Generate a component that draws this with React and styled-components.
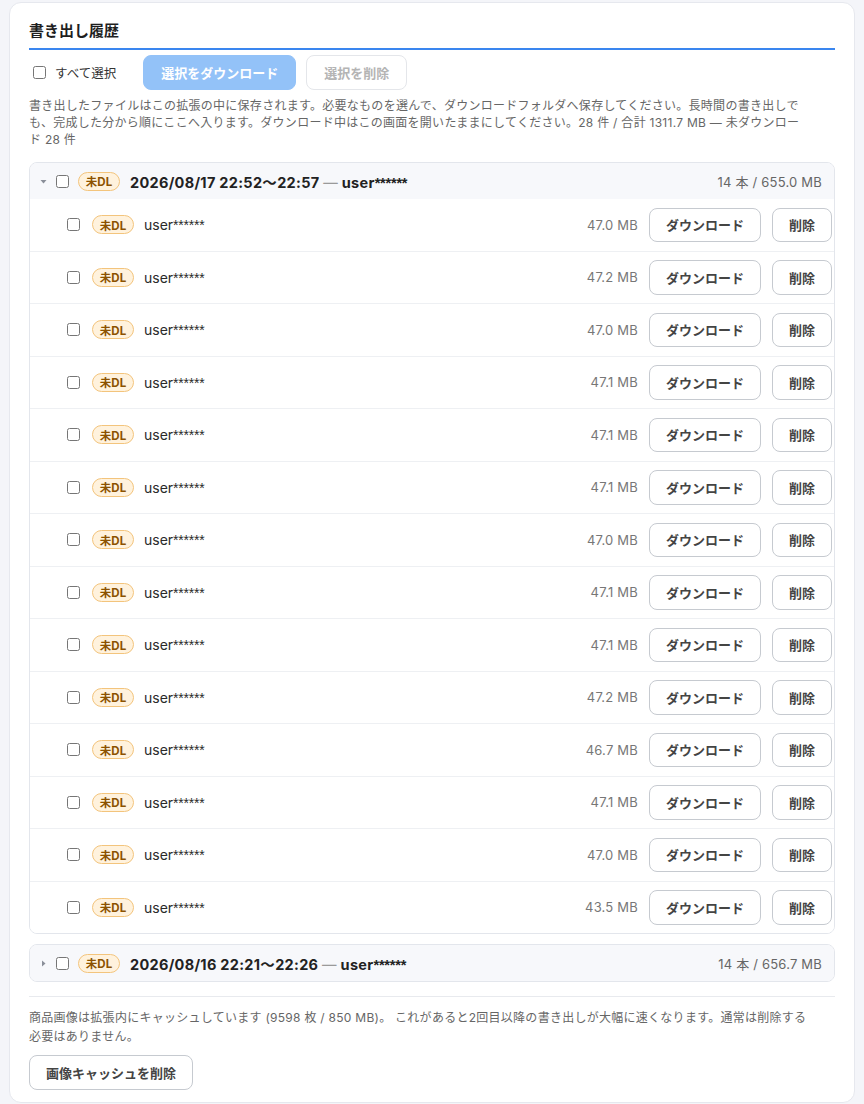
import React from "react";
import styled, { createGlobalStyle } from "styled-components";

const Global = createGlobalStyle`
  html, body { margin: 0; padding: 0; background: #f4f5f9; }
  body {
    font-family: Inter, "Noto Sans CJK JP", sans-serif;
    color: #222;
    -webkit-font-smoothing: antialiased;
    text-spacing-trim: space-all;
  }
  * { box-sizing: border-box; }
`;

const Page = styled.div`
  padding: 2px 9px 0 9px;
`;

const Card = styled.div`
  background: #fff;
  border: 1px solid #e6e8ee;
  border-radius: 12px;
  padding: 17px 19px 12px 19px;
`;

const Title = styled.h2`
  margin: 0;
  font-size: 15px;
  line-height: 22px;
  font-weight: 700;
  color: #1f1f1f;
  padding-bottom: 6px;
  border-bottom: 2px solid #3a86ef;
`;

const Toolbar = styled.div`
  display: flex;
  align-items: center;
  gap: 10px;
  margin-top: 5px;
`;

const CheckLabel = styled.label`
  display: flex;
  align-items: center;
  gap: 9px;
  font-size: 12.5px;
  color: #333;
  padding-left: 4px;
  margin-right: 17px;
`;

const Check = styled.input.attrs({ type: "checkbox" })`
  width: 13px;
  height: 13px;
  margin: 0;
  flex: none;
`;

const Button = styled.button`
  font-family: inherit;
  height: ${(p) => (p.$h ? p.$h : "34.5px")};
  padding: 0 ${(p) => (p.$wide ? "17px" : "16px")};
  font-size: 13px;
  font-weight: 700;
  border-radius: 8px;
  white-space: nowrap;
  flex: none;
  cursor: pointer;
  background: ${(p) => (p.$primary ? "#93c2f8" : "#fff")};
  color: ${(p) => (p.$primary ? "#fff" : p.$disabled ? "#b4b4b4" : "#444")};
  border: 1px solid
    ${(p) => (p.$primary ? "#93c2f8" : p.$disabled ? "#e4e6ea" : "#c6cad0")};
`;

const Desc = styled.p`
  margin: 7px 0 0 0;
  padding-right: 25px;
  font-size: 12px;
  letter-spacing: 0.27px;
  line-height: 17px;
  color: #666;
`;

const Group = styled.div`
  border: 1px solid #e3e6ec;
  border-radius: 8px;
  overflow: hidden;
  margin-top: ${(p) => p.$mt || "0"};
`;

const GroupHeader = styled.div`
  display: flex;
  align-items: center;
  height: 36px;
  padding: 0 12px 0 10px;
  background: #f7f8fb;
`;

const Caret = styled.span`
  width: 7px;
  height: 7px;
  display: flex;
  align-items: center;
  justify-content: center;
  margin-right: 9px;
  flex: none;
`;

const Badge = styled.span`
  display: inline-flex;
  align-items: center;
  justify-content: center;
  width: 42px;
  height: 19px;
  border-radius: 10px;
  background: #fff2dd;
  border: 1px solid #f3c47c;
  color: #8c5200;
  font-size: 11.5px;
  font-weight: 700;
  flex: none;
  margin-left: ${(p) => p.$ml || "0"};
`;

const GroupTitle = styled.span`
  margin-left: 10px;
  font-size: 14.5px;
  font-weight: 700;
  letter-spacing: 0.3px;
  color: #222;
  white-space: nowrap;
`;

const Dash = styled.span`
  color: #9a9a9a;
  font-weight: 400;
`;

const Mask = styled.span`
  font-family: "Liberation Sans", sans-serif;
  letter-spacing: -0.2px;
`;

const Meta = styled.span`
  margin-left: auto;
  font-size: 13px;
  letter-spacing: 0.2px;
  color: #666;
  white-space: nowrap;
`;

const Row = styled.div`
  display: flex;
  align-items: center;
  padding: 8.5px 2px 8.5px 37px;
  border-top: 1px solid #eef0f3;
  background: #fff;
  &:first-of-type { border-top: none; }
`;

const Name = styled.span`
  margin-left: 10px;
  font-size: 14px;
  color: #2a2a2a;
`;

const Size = styled.span`
  margin-left: auto;
  margin-right: 11px;
  font-size: 13px;
  letter-spacing: 0.2px;
  color: #777;
  white-space: nowrap;
`;

const RowButtons = styled.div`
  display: flex;
  gap: 11px;
`;

const Footer = styled.div`
  margin-top: 14px;
  border-top: 1px solid #e8eaee;
  padding-top: 11px;
`;

const FooterText = styled.p`
  margin: 0 0 9px 0;
  padding-right: 25px;
  font-size: 12px;
  letter-spacing: 0.27px;
  line-height: 19px;
  color: #666;
`;

const CaretIcon = ({ open }) => (
  <svg width="7" height="7" viewBox="0 0 7 7">
    {open ? (
      <path d="M0.5 2 L6.5 2 L3.5 5.5 Z" fill="#8a8f99" />
    ) : (
      <path d="M2 0.5 L5.5 3.5 L2 6.5 Z" fill="#8a8f99" />
    )}
  </svg>
);

const sizes = [
  "47.0", "47.2", "47.0", "47.1", "47.1", "47.1", "47.0",
  "47.1", "47.1", "47.2", "46.7", "47.1", "47.0", "43.5",
];

const User = () => (
  <>
    user<Mask>******</Mask>
  </>
);

export default function App() {
  return (
    <>
      <Global />
      <Page>
        <Card>
          <Title>書き出し履歴</Title>
          <Toolbar>
            <CheckLabel>
              <Check />
              すべて選択
            </CheckLabel>
            <Button $primary $wide>選択をダウンロード</Button>
            <Button $disabled $wide>選択を削除</Button>
          </Toolbar>
          <Desc>
            書き出したファイルはこの拡張の中に保存されます。必要なものを選んで、ダウンロードフォルダへ保存してください。長時間の書き出しでも、完成した分から順にここへ入ります。ダウンロード中はこの画面を開いたままにしてください。28 件 / 合計 1311.7 MB — 未ダウンロード 28 件
          </Desc>

          <Group $mt="14.5px">
            <GroupHeader>
              <Caret>
                <CaretIcon open />
              </Caret>
              <Check />
              <Badge $ml="9px">未DL</Badge>
              <GroupTitle>
                2026/08/17 22:52〜22:57 <Dash>—</Dash> <User />
              </GroupTitle>
              <Meta>14 本 / 655.0 MB</Meta>
            </GroupHeader>
            <div>
              {sizes.map((s, i) => (
                <Row key={i}>
                  <Check />
                  <Badge $ml="12px">未DL</Badge>
                  <Name>
                    <User />
                  </Name>
                  <Size>{s} MB</Size>
                  <RowButtons>
                    <Button>ダウンロード</Button>
                    <Button>削除</Button>
                  </RowButtons>
                </Row>
              ))}
            </div>
          </Group>

          <Group $mt="10px">
            <GroupHeader>
              <Caret>
                <CaretIcon />
              </Caret>
              <Check />
              <Badge $ml="9px">未DL</Badge>
              <GroupTitle>
                2026/08/16 22:21〜22:26 <Dash>—</Dash> <User />
              </GroupTitle>
              <Meta>14 本 / 656.7 MB</Meta>
            </GroupHeader>
          </Group>

          <Footer>
            <FooterText>
              商品画像は拡張内にキャッシュしています (9598 枚 / 850 MB)。 これがあると2回目以降の書き出しが大幅に速くなります。通常は削除する必要はありません。
            </FooterText>
            <Button $h="35px">画像キャッシュを削除</Button>
          </Footer>
        </Card>
      </Page>
    </>
  );
}
